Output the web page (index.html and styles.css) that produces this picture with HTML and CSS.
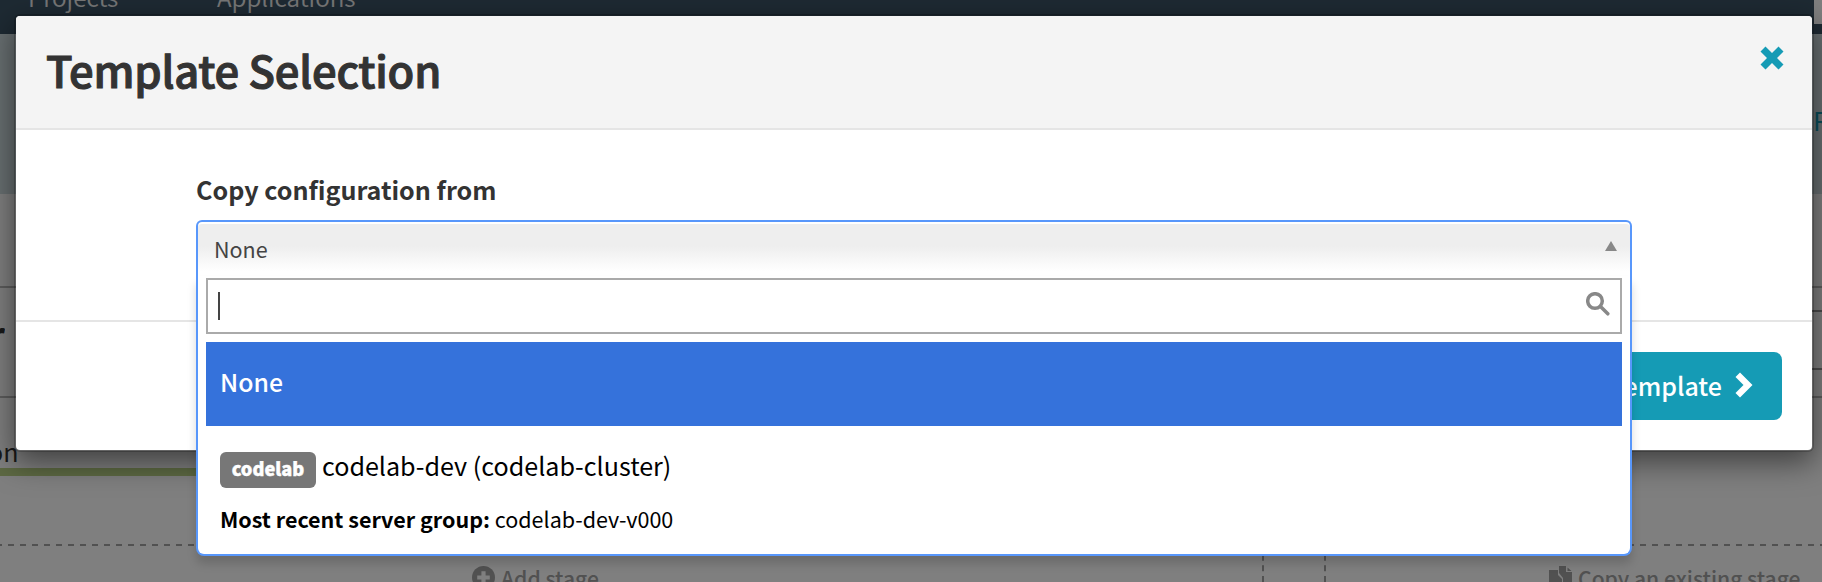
FILE: index.html
```html
<!DOCTYPE html>
<html lang="en">
<head>
<meta charset="utf-8">
<title>Template Selection</title>
<link rel="stylesheet" href="styles.css">
</head>
<body>
<div class="page">
  <nav class="nav"><span class="nav-projects">Projects</span><span class="nav-apps">Applications</span><span class="nav-search"></span></nav>
  <section class="band"><span class="band-link">R</span></section>
  <section class="pipeline">
    <div class="spacer"></div>
    <div class="row title-row"><span class="row-title">r</span><span class="row-box"></span></div>
    <div class="row tab-row"><span class="tab-text">on</span></div>
  </section>
  <section class="stages">
    <div class="stage add">
      <svg class="plus" viewBox="0 0 22 22"><circle cx="11" cy="11" r="11"/><path d="M11 5v12M5 11h12"/></svg>
      <span>Add stage</span>
    </div>
    <div class="stage-gap"></div>
    <div class="stage copy">
      <svg class="files" viewBox="0 0 23 26"><path d="M0 4h9v5l4 4v13H0zM10 0h7v6h6v20h-9V12l-4-5zM18.500 1.500l4 3.500h-4z"/></svg>
      <span>Copy an existing stage</span>
    </div>
  </section>
</div>
<div class="backdrop"></div>
<div class="modal">
  <header class="modal-header">
    <h1 class="modal-title">Template Selection</h1>
    <svg class="close" viewBox="0 0 24 24"><path d="M5.500 0.500 12 7l6.500-6.500 5 5L17 12l6.500 6.500-5 5L12 17l-6.500 6.500-5-5L7 12 .5 5.500z"/></svg>
  </header>
  <div class="modal-body">
    <div class="field">
      <div class="label">Copy configuration from</div>
      <div class="select">
        <div class="select-head"><span class="select-value">None</span><span class="arrow"></span></div>
        <div class="drop">
          <div class="search"><span class="caret"></span>
            <svg class="glass" viewBox="0 0 24 24"><circle cx="9" cy="9" r="7.300"/><path d="m14.500 14.500 7.300 7.300"/></svg>
          </div>
          <div class="option active">None</div>
          <div class="option">
            <div class="cluster"><span class="badge">codelab</span><span class="cluster-name">codelab-dev (codelab-cluster)</span></div>
            <div class="recent"><b>Most recent server group:</b> <span>codelab-dev-v000</span></div>
          </div>
        </div>
      </div>
    </div>
  </div>
  <footer class="modal-footer">
    <div class="button"><span>Continue without any template</span>
      <svg class="chevron" viewBox="0 0 18 26"><path d="M5 .5 17.500 13 5 25.500.5 21l8-8-8-8z"/></svg>
    </div>
  </footer>
</div>
</body>
</html>
```

FILE: styles.css
```css
* { box-sizing: border-box; }
body { margin: 0; width: 1822px; height: 582px; overflow: hidden; position: relative; font-family: "Noto Sans CJK SC", "Noto Sans", sans-serif; color: #333; background: #fff; }
svg { display: block; flex: none; }

.page { height: 582px; overflow: hidden; }
.nav { height: 34px; background: #3c5466; display: flex; color: #eee; font-size: 24.2px; font-weight: 350; line-height: 28px; padding-left: 28px; }
.nav span { white-space: nowrap; }
.nav-projects, .nav-apps { margin-top: -17px; }
.nav-projects { width: 189px; }
.nav-search { width: 8px; height: 24px; margin-left: auto; background: #fff; }
.band { height: 160px; background: #d0dee2; display: flex; justify-content: flex-end; }
.band-link { width: 9px; overflow: hidden; color: #159bb5; font-size: 26px; line-height: 40px; padding-top: 66px; }
.pipeline { height: 350px; }
.spacer { height: 94px; border-bottom: 2px solid #bbb; }
.title-row { height: 110px; border-bottom: 2px solid #bbb; display: flex; justify-content: space-between; }
.row-title { font-size: 40px; font-weight: 700; line-height: 40px; width: 5px; direction: rtl; overflow: hidden; margin-top: 26px; height: 40px; }
.row-box { width: 10px; height: 60px; margin-top: 22px; border-top: 2px solid #999; border-bottom: 2px solid #999; }
.tab-row { width: 400px; height: 78px; border-bottom: 8px solid #bad286; display: flex; }
.tab-text { font-size: 25px; line-height: 40px; margin: 33px 0 0 -12px; }
.stages { display: flex; height: 106px; margin-top: -68px; padding-top: 68px; overflow: hidden; color: #a2a2a2; font-size: 21.1px; font-weight: 500; line-height: 30px; background: linear-gradient(90deg, #a2a2a2 2px, transparent 2px 8px, #a2a2a2 8px) 0 68px / 12px 2px repeat-x; }
.stage { display: flex; padding-top: 19px; gap: 6px; white-space: nowrap; }
.add { width: 1264px; padding-left: 472px; border-right: 2px dashed #a2a2a2; }
.stage-gap { width: 60px; }
.copy { flex: 1; padding-left: 223px; border-left: 2px dashed #a2a2a2; }
.plus { width: 23px; height: 23px; margin-top: 3px; }
.plus circle { fill: #a2a2a2; }
.plus path { stroke: #fff; stroke-width: 4; }
.files { width: 23px; height: 26px; margin-top: 3px; fill: #a2a2a2; }

.backdrop { position: absolute; inset: 0; background: rgba(0, 0, 0, .5); }
.modal { position: absolute; left: 14px; top: 14px; width: 1800px; height: 438px; border: 2px solid rgba(0, 0, 0, .2); border-radius: 6px; background: #fff; background-clip: padding-box; box-shadow: 0 10px 30px rgba(0, 0, 0, .5); }
.modal-header { height: 114px; border-bottom: 2px solid #e5e5e5; border-radius: 4px 4px 0 0; background: #f4f4f4; display: flex; justify-content: space-between; padding: 0 28px 0 30px; }
.modal-title { margin: 28px 0 0; font-size: 43.5px; line-height: 52px; font-weight: 500; letter-spacing: -.2px; -webkit-text-stroke: 1.1px #333; white-space: nowrap; }
.close { width: 24px; height: 24px; margin-top: 30px; fill: #159bb5; }
.modal-body { height: 192px; border-bottom: 2px solid #e5e5e5; padding: 42px 180px 0; }
.field { height: 428px; position: relative; z-index: 1; }
.label { font-size: 25.1px; font-weight: 700; line-height: 34px; height: 48px; white-space: nowrap; }
.select { color: #444; }
.select-head { height: 56px; border: 2px solid #5897fb; border-bottom: 0; border-radius: 6px 6px 0 0; background: linear-gradient(#eee 20%, #eee 45%, #fff 92%); box-shadow: inset 0 2px 0 #fff; display: flex; justify-content: space-between; padding: 0 13px 0 16px; }
.select-value { font-size: 21.5px; line-height: 30px; margin-top: 12px; }
.arrow { width: 12px; height: 10px; margin-top: 19px; background: #888; clip-path: polygon(50% 0, 100% 100%, 0 100%); }
.drop { height: 280px; border: 2px solid #5897fb; border-top: 0; border-radius: 0 0 8px 8px; background: #fff; box-shadow: 0 8px 10px rgba(0, 0, 0, .15); padding: 2px 8px 0; color: #000; }
.search { height: 56px; border: 2px solid #aaa; display: flex; justify-content: space-between; padding: 12px 10px 0; }
.caret { width: 2px; height: 28px; background: #444; }
.glass { width: 24px; height: 24px; fill: none; stroke: #888; stroke-width: 3.5; stroke-linecap: round; }
.option { padding: 21px 14px 0; white-space: nowrap; }
.option.active { height: 84px; margin-top: 8px; background: #3572db; color: #fff; font-size: 24.8px; font-weight: 500; line-height: 36px; }
.cluster { display: flex; gap: 6px; height: 40px; }
.badge { width: 96px; height: 36px; margin-top: 5px; border-radius: 6px; background: #777; color: #fff; font-size: 18.2px; font-weight: 900; -webkit-text-stroke: .4px #fff; line-height: 33px; text-align: center; }
.cluster-name { font-size: 25.1px; line-height: 36px; }
.recent { font-size: 21.5px; line-height: 30px; margin-top: 17px; }
.modal-footer { display: flex; justify-content: flex-end; padding: 30px 30px 0; }
.button { height: 68px; border-radius: 8px; background: #159bb5; color: #fff; font-size: 25px; font-weight: 500; line-height: 66px; padding: 0 29px 0 24px; display: flex; gap: 13px; white-space: nowrap; }
.chevron { width: 18px; height: 26px; margin-top: 20px; fill: #fff; }
```
